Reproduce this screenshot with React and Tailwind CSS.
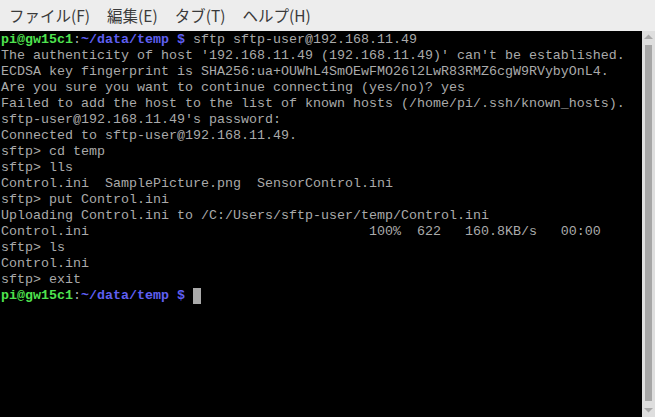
import React from "react";

const G = ({ children }) => <span className="font-bold text-[#4fe34f]">{children}</span>;
const B = ({ children }) => <span className="font-bold text-[#5f5ff2]">{children}</span>;

const Prompt = () => (
  <>
    <G>pi@gw15c1</G>:<B>~/data/temp $</B>{" "}
  </>
);

const lines = [
  "The authenticity of host '192.168.11.49 (192.168.11.49)' can't be established.",
  "ECDSA key fingerprint is SHA256:ua+OUWhL4SmOEwFMO26l2LwR83RMZ6cgW9RVybyOnL4.",
  "Are you sure you want to continue connecting (yes/no)? yes",
  "Failed to add the host to the list of known hosts (/home/pi/.ssh/known_hosts).",
  "sftp-user@192.168.11.49's password:",
  "Connected to sftp-user@192.168.11.49.",
  "sftp> cd temp",
  "sftp> lls",
  "Control.ini  SamplePicture.png  SensorControl.ini",
  "sftp> put Control.ini",
  "Uploading Control.ini to /C:/Users/sftp-user/temp/Control.ini",
  "Control.ini                                   100%  622   160.8KB/s   00:00",
  "sftp> ls",
  "Control.ini",
  "sftp> exit",
];

export default function App() {
  return (
    <div className="w-[655px] h-[417px] flex flex-col overflow-hidden bg-black">
      <div
        className="h-[31px] shrink-0 bg-[#ededed] flex items-center pl-[9px] text-[15.5px] text-[#3a3a3a]"
        style={{ fontFamily: '"Noto Sans CJK JP", "Noto Sans", sans-serif' }}
      >
        <span>ファイル(F)</span>
        <span className="ml-[17px]">編集(E)</span>
        <span className="ml-[17px]">タブ(T)</span>
        <span className="ml-[17px]">ヘルプ(H)</span>
      </div>
      <div className="flex flex-1 min-h-0">
        <div
          className="flex-1 bg-black text-[#aaaaaa] text-[13.33px] leading-[16px] whitespace-pre pl-[1px] pt-[1px] overflow-hidden"
          style={{ fontFamily: '"Liberation Mono", monospace' }}
        >
          <div>
            <Prompt />
            sftp sftp-user@192.168.11.49
          </div>
          {lines.map((l, i) => (
            <div key={i}>{l}</div>
          ))}
          <div className="flex items-stretch">
            <span>
              <Prompt />
            </span>
            <span className="inline-block w-[8px] h-[16px] bg-[#aaaaaa]" />
          </div>
        </div>
        <div className="w-[13px] bg-[#dedede] flex flex-col items-center">
          <svg width="9" height="6" viewBox="0 0 9 6" className="mt-[3px]">
            <polygon points="0,5 4.5,0.5 9,5" fill="#a8a8a8" />
          </svg>
          <div className="mt-[5px] w-[7px] flex-1 bg-[#a6a6a6]" />
          <svg width="9" height="6" viewBox="0 0 9 6" className="mt-[6px] mb-[4px]">
            <polygon points="0,1 9,1 4.5,5.5" fill="#a8a8a8" />
          </svg>
        </div>
      </div>
    </div>
  );
}
